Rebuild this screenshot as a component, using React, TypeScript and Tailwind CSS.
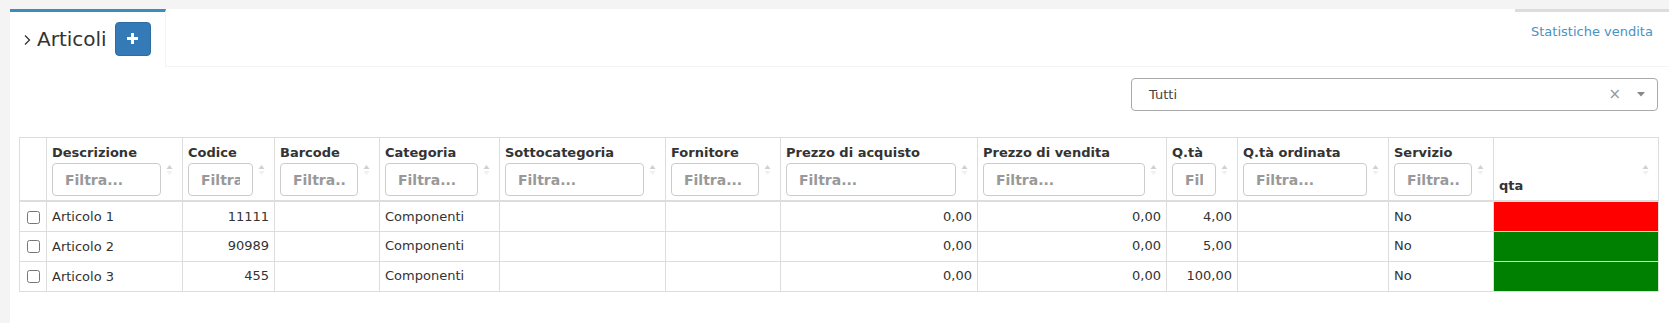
import React from "react";

type Row = {
  descrizione: string;
  codice: string;
  categoria: string;
  acquisto: string;
  vendita: string;
  qta: string;
  servizio: string;
  color: string;
};

const rows: Row[] = [
  { descrizione: "Articolo 1", codice: "11111", categoria: "Componenti", acquisto: "0,00", vendita: "0,00", qta: "4,00", servizio: "No", color: "bg-[#ff0000]" },
  { descrizione: "Articolo 2", codice: "90989", categoria: "Componenti", acquisto: "0,00", vendita: "0,00", qta: "5,00", servizio: "No", color: "bg-[#008000]" },
  { descrizione: "Articolo 3", codice: "455", categoria: "Componenti", acquisto: "0,00", vendita: "0,00", qta: "100,00", servizio: "No", color: "bg-[#008000]" },
];

const columns = [
  { label: "Descrizione", width: "w-[136px]" },
  { label: "Codice", width: "w-[92px]" },
  { label: "Barcode", width: "w-[105px]" },
  { label: "Categoria", width: "w-[120px]" },
  { label: "Sottocategoria", width: "w-[166px]" },
  { label: "Fornitore", width: "w-[115px]" },
  { label: "Prezzo di acquisto", width: "w-[197px]" },
  { label: "Prezzo di vendita", width: "w-[189px]" },
  { label: "Q.tà", width: "w-[71px]" },
  { label: "Q.tà ordinata", width: "w-[151px]" },
  { label: "Servizio", width: "w-[105px]" },
];

function SortIcon() {
  return (
    <svg
      className="absolute right-[9px] top-[26px]"
      width="7"
      height="12"
      viewBox="0 0 7 12"
    >
      <path d="M3.5 1 L6.5 5 L0.5 5 Z" fill="#d0d0d0" />
      <path d="M3.5 11 L6.5 7 L0.5 7 Z" fill="#f0f0f0" />
    </svg>
  );
}

function HeaderCell({ label }: { label: string }) {
  return (
    <th className="relative border border-[#ddd] border-b-2 pt-[6px] pb-[4px] pl-[5px] pr-[21px] text-left align-bottom font-bold">
      <div className="leading-[18px] whitespace-nowrap overflow-hidden">{label}</div>
      <input
        className="block w-full h-[33px] mt-[1px] border border-[#ccc] rounded-[4px] px-[12px] text-[14px] font-bold text-[#555] placeholder:text-[#999] outline-none"
        placeholder="Filtra..."
      />
      <SortIcon />
    </th>
  );
}

export default function App() {
  return (
    <div className="min-h-[323px] bg-[#f4f4f4] pt-[9px] pl-[10px] font-['DejaVu_Sans',sans-serif] text-[13px] text-[#333]">
      <div className="bg-white min-h-[314px]">
        {/* tabs */}
        <div className="flex h-[58px] border-b border-[#f4f4f4]">
          <div className="w-[156px] -mb-px h-[59px] bg-white border-t-[3px] border-t-[#3c8dbc] border-r border-r-[#f4f4f4] flex items-center pl-[13px] pb-[3px]">
            <svg width="9" height="12" viewBox="0 0 9 12" className="mr-[5px] mt-[2px]">
              <path d="M2 1.5 L6.5 6 L2 10.5" stroke="#333" strokeWidth="1.3" fill="none" />
            </svg>
            <span className="text-[20px] leading-[24px] text-[#333]">Articoli</span>
            <button className="ml-[8px] w-[36px] h-[34px] bg-[#337ab7] border border-[#2e6da4] rounded-[4px] flex items-center justify-center">
              <svg width="11" height="11" viewBox="0 0 11 11">
                <rect x="4" y="0" width="3" height="11" fill="white" />
                <rect x="0" y="4" width="11" height="3" fill="white" />
              </svg>
            </button>
          </div>
          <div className="ml-auto w-[154px] border-t-[3px] border-t-[#dcdcdc] px-[16px] pt-[10px]">
            <span className="text-[#4a92bf] leading-[20px] whitespace-nowrap">Statistiche vendita</span>
          </div>
        </div>

        {/* content */}
        <div className="pt-[11px] pl-[9px] pr-[11px]">
          <div className="flex justify-end">
            <div className="w-[527px] h-[33px] border border-[#aaa] rounded-[4px] bg-white flex items-center pl-[17px] pr-[12px]">
              <span className="text-[#444] flex-1">Tutti</span>
              <span className="text-[#999] text-[15px] mr-[16px]">×</span>
              <svg width="8" height="5" viewBox="0 0 8 5">
                <path d="M0 0 L8 0 L4 4.5 Z" fill="#888" />
              </svg>
            </div>
          </div>

          <table className="mt-[26px] w-[1639px] table-fixed border-collapse border border-[#ddd]">
            <colgroup>
              <col className="w-[27px]" />
              {columns.map((c) => (
                <col key={c.label} className={c.width} />
              ))}
              <col className="w-[165px]" />
            </colgroup>
            <thead>
              <tr>
                <th className="border border-[#ddd] border-b-2" />
                {columns.map((c) => (
                  <HeaderCell key={c.label} label={c.label} />
                ))}
                <th className="relative border border-[#ddd] border-b-2 pl-[5px] pb-[5px] text-left align-bottom font-bold">
                  <div className="leading-[18px]">qta</div>
                  <SortIcon />
                </th>
              </tr>
            </thead>
            <tbody>
              {rows.map((r) => (
                <tr key={r.descrizione} className="h-[30px]">
                  <td className="border border-[#ddd] text-center align-middle">
                    <input type="checkbox" className="m-0 w-[13px] h-[13px] align-middle accent-[#333]" />
                  </td>
                  <td className="border border-[#ddd] px-[5px] leading-[19px]">{r.descrizione}</td>
                  <td className="border border-[#ddd] px-[5px] text-right">{r.codice}</td>
                  <td className="border border-[#ddd] px-[5px]" />
                  <td className="border border-[#ddd] px-[5px]">{r.categoria}</td>
                  <td className="border border-[#ddd] px-[5px]" />
                  <td className="border border-[#ddd] px-[5px]" />
                  <td className="border border-[#ddd] px-[5px] text-right">{r.acquisto}</td>
                  <td className="border border-[#ddd] px-[5px] text-right">{r.vendita}</td>
                  <td className="border border-[#ddd] px-[5px] text-right">{r.qta}</td>
                  <td className="border border-[#ddd] px-[5px]" />
                  <td className="border border-[#ddd] px-[5px]">{r.servizio}</td>
                  <td className={`border border-[#ddd] ${r.color}`} />
                </tr>
              ))}
            </tbody>
          </table>
        </div>
      </div>
    </div>
  );
}
